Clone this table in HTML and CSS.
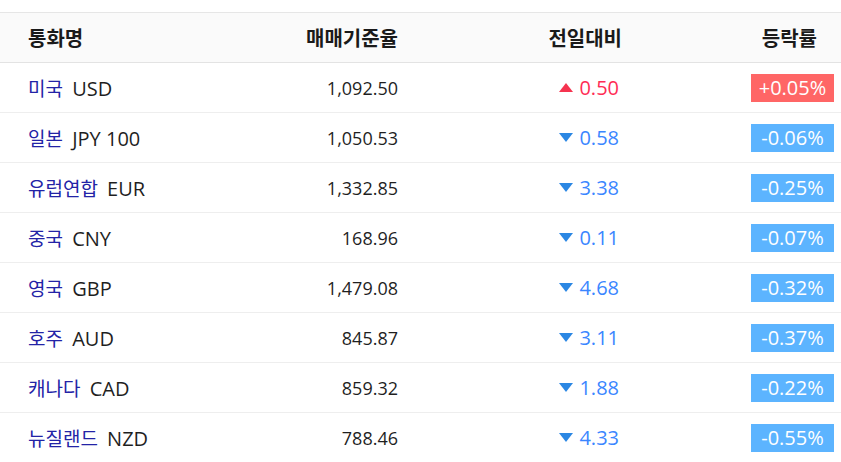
FILE: index.html
```html
<!DOCTYPE html>
<html lang="ko">
<head>
<meta charset="utf-8">
<link rel="stylesheet" href="styles.css">
</head>
<body>
<div class="table">
  <div class="row head">
    <div class="c name">통화명</div>
    <div class="c rate">매매기준율</div>
    <div class="c chg">전일대비</div>
    <div class="c pct">등락률</div>
  </div>
  <div class="row">
    <div class="c name"><span class="ko">미국</span> USD</div>
    <div class="c rate">1,092.50</div>
    <div class="c chg up"><svg class="tri" viewBox="0 0 14 9"><path d="M7 0L14 9H0Z"/></svg>0.50</div>
    <div class="c pct"><span class="badge up">+0.05%</span></div>
  </div>
  <div class="row">
    <div class="c name"><span class="ko">일본</span> JPY 100</div>
    <div class="c rate">1,050.53</div>
    <div class="c chg down"><svg class="tri" viewBox="0 0 14 9"><path d="M0 0H14L7 9Z"/></svg>0.58</div>
    <div class="c pct"><span class="badge down">-0.06%</span></div>
  </div>
  <div class="row">
    <div class="c name"><span class="ko">유럽연합</span> EUR</div>
    <div class="c rate">1,332.85</div>
    <div class="c chg down"><svg class="tri" viewBox="0 0 14 9"><path d="M0 0H14L7 9Z"/></svg>3.38</div>
    <div class="c pct"><span class="badge down">-0.25%</span></div>
  </div>
  <div class="row">
    <div class="c name"><span class="ko">중국</span> CNY</div>
    <div class="c rate">168.96</div>
    <div class="c chg down"><svg class="tri" viewBox="0 0 14 9"><path d="M0 0H14L7 9Z"/></svg>0.11</div>
    <div class="c pct"><span class="badge down">-0.07%</span></div>
  </div>
  <div class="row">
    <div class="c name"><span class="ko">영국</span> GBP</div>
    <div class="c rate">1,479.08</div>
    <div class="c chg down"><svg class="tri" viewBox="0 0 14 9"><path d="M0 0H14L7 9Z"/></svg>4.68</div>
    <div class="c pct"><span class="badge down">-0.32%</span></div>
  </div>
  <div class="row">
    <div class="c name"><span class="ko">호주</span> AUD</div>
    <div class="c rate">845.87</div>
    <div class="c chg down"><svg class="tri" viewBox="0 0 14 9"><path d="M0 0H14L7 9Z"/></svg>3.11</div>
    <div class="c pct"><span class="badge down">-0.37%</span></div>
  </div>
  <div class="row">
    <div class="c name"><span class="ko">캐나다</span> CAD</div>
    <div class="c rate">859.32</div>
    <div class="c chg down"><svg class="tri" viewBox="0 0 14 9"><path d="M0 0H14L7 9Z"/></svg>1.88</div>
    <div class="c pct"><span class="badge down">-0.22%</span></div>
  </div>
  <div class="row">
    <div class="c name"><span class="ko">뉴질랜드</span> NZD</div>
    <div class="c rate">788.46</div>
    <div class="c chg down"><svg class="tri" viewBox="0 0 14 9"><path d="M0 0H14L7 9Z"/></svg>4.33</div>
    <div class="c pct"><span class="badge down">-0.55%</span></div>
  </div>
</div>
</body>
</html>
```
FILE: styles.css
```css
html, body {
  margin: 0;
  padding: 0;
  background: #fff;
}
body {
  font-family: "Open Sans", "Noto Sans CJK KR", sans-serif;
  color: #1f1f1f;
  font-size: 18px;
  padding-top: 12px;
}
.table {
  border-top: 1px solid #e6e6e6;
}
.row {
  display: grid;
  grid-template-columns: 200px 198px 222px 1fr;
  align-items: center;
  height: 49px;
  border-bottom: 1px solid #eeeeee;
}
.row.head {
  background: #fafafa;
  font-family: "Noto Sans CJK KR", sans-serif;
  font-weight: bold;
  font-size: 20px;
  color: #1a1a1a;
  border-bottom: 1px solid #e3e3e3;
}
.c {
  white-space: nowrap;
}
.name {
  padding-left: 28px;
  font-size: 20px;
}
.ko {
  font-family: "Noto Sans CJK KR", sans-serif;
  font-size: 19px;
  color: #2323a6;
  margin-right: 4px;
}
.rate {
  text-align: right;
}
.chg {
  display: flex;
  justify-content: flex-end;
  align-items: center;
  font-size: 20px;
  padding-right: 1px;
}
.head .chg {
  padding-right: 0;
  margin-right: -2px;
}
.tri {
  width: 14px;
  height: 9px;
  margin-right: 6px;
}
.chg.up { color: #ff2d55; }
.chg.up .tri { fill: #f5334f; }
.chg.down { color: #3a86ff; }
.chg.down .tri { fill: #2b87e3; }
.pct {
  text-align: right;
  padding-right: 7px;
}
.head .pct {
  padding-right: 24px;
}
.badge {
  display: inline-block;
  width: 83px;
  height: 28px;
  line-height: 28px;
  text-align: center;
  color: #fff;
  font-size: 20px;
  vertical-align: middle;
}
.badge.up { background: #ff6666; }
.badge.down { background: #5cb4ff; }
```
